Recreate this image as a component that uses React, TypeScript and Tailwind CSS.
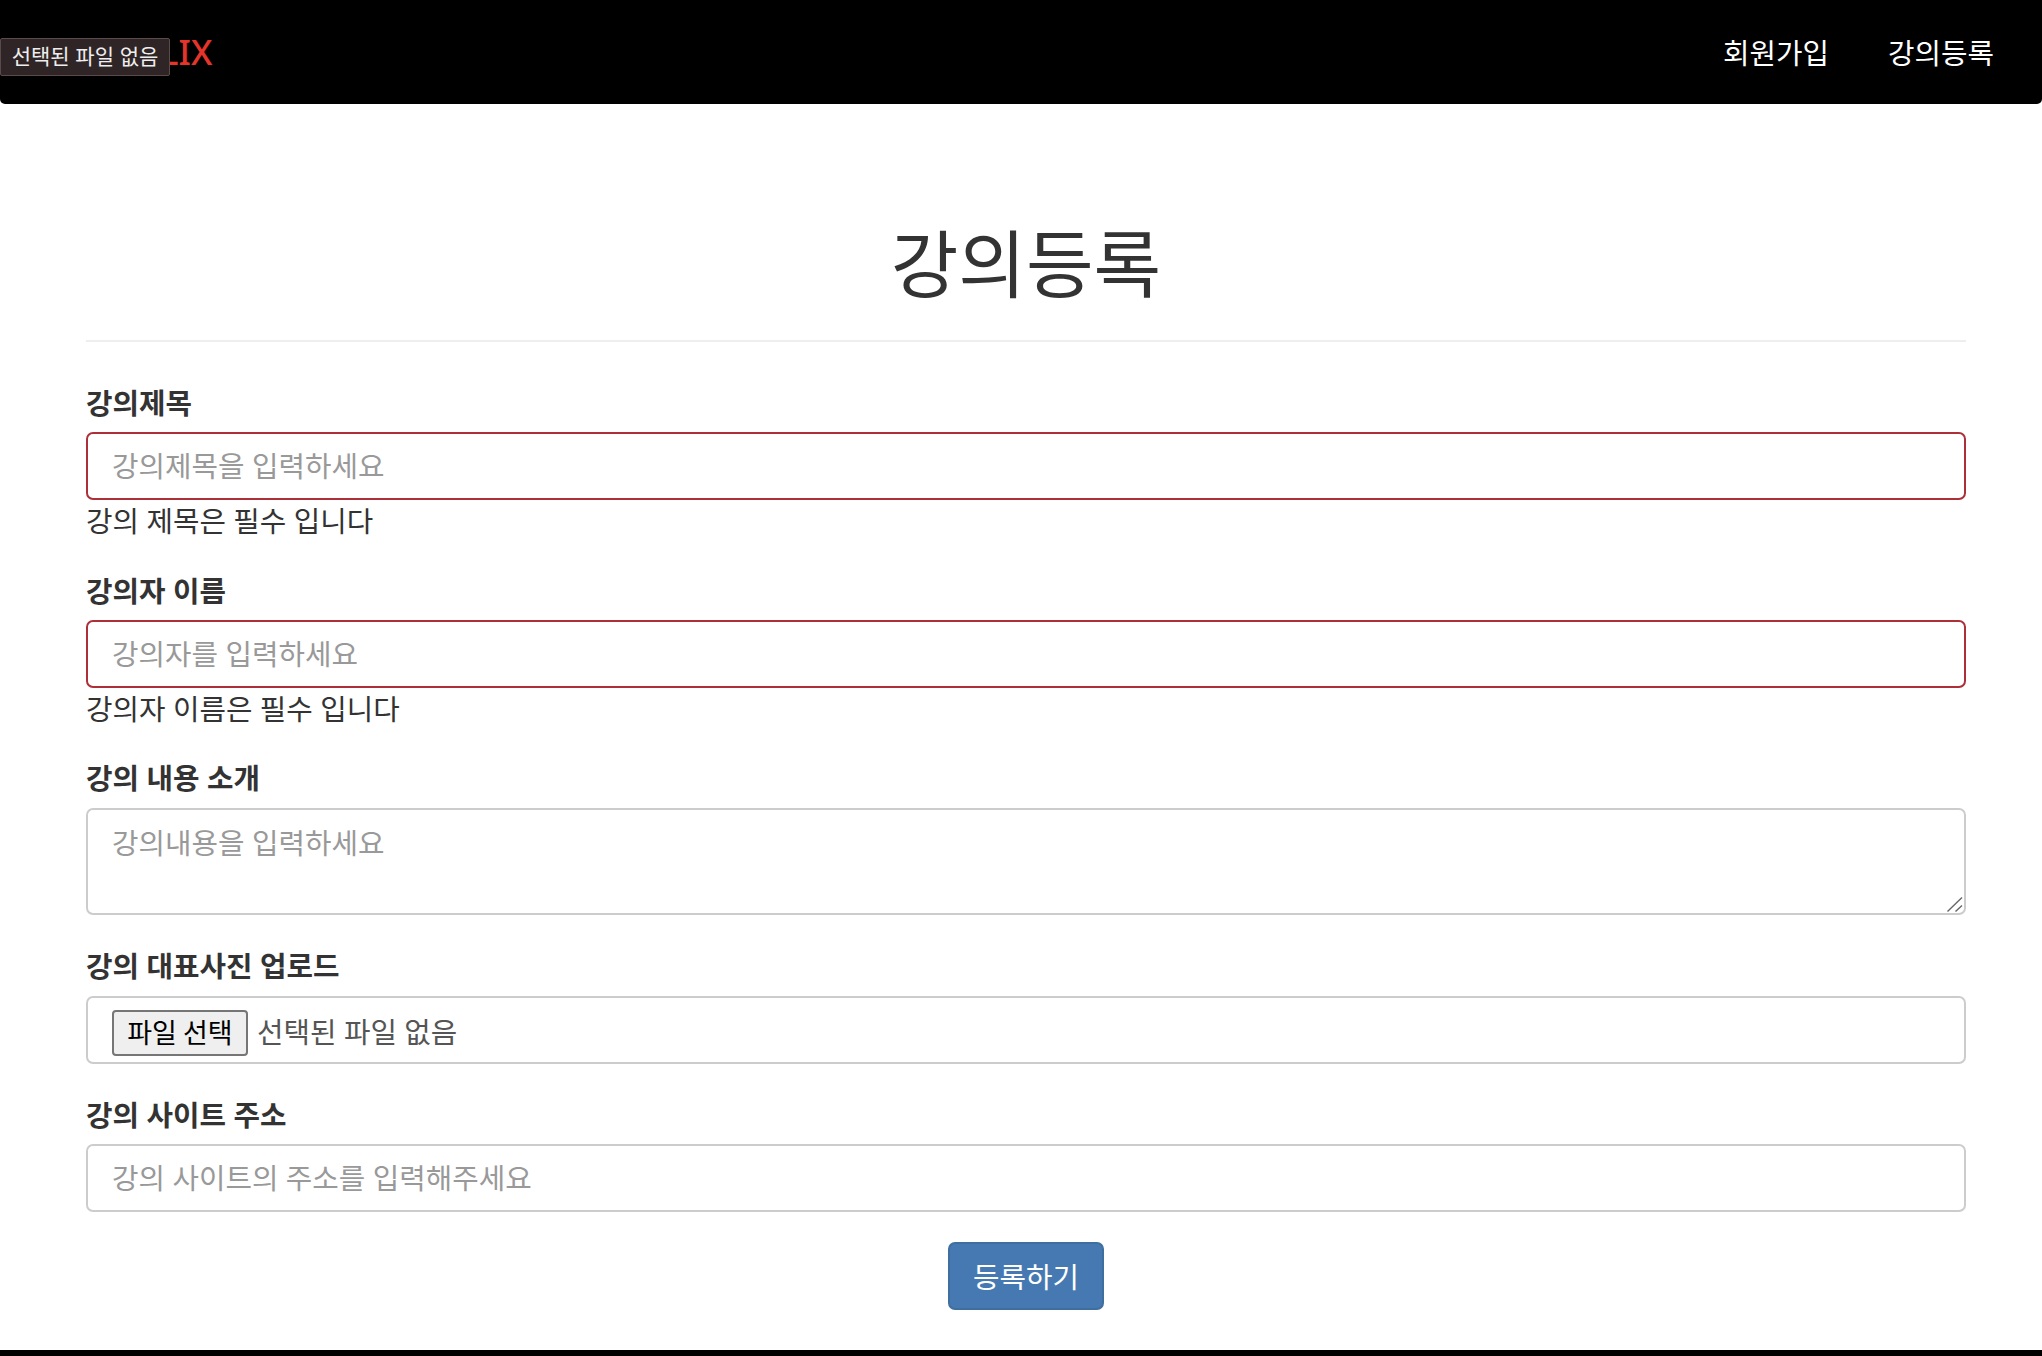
function Label({ children }: { children: string }) {
  return <label className="block h-[36px] text-[28.8px] leading-[36px] font-bold text-[#333]">{children}</label>;
}

const inputClass =
  "block w-full h-[68px] rounded-[7px] border-2 bg-white px-[24px] pb-[3px] text-[28.8px] [word-spacing:1px] text-[#555] outline-none placeholder:text-[#999] ";

export default function App() {
  return (
    <div className="relative h-[1356px] overflow-hidden bg-white font-['Noto_Sans_CJK_KR','Liberation_Sans',sans-serif] text-[#333] [word-spacing:1px]">
      <nav className="flex h-[104px] items-center justify-between rounded-b-[5px] bg-black pl-[75px] pr-[48px]">
        <a className="mb-[2px] text-[35px] leading-none font-medium font-['Noto_Sans',sans-serif] text-[#e5352a]">NETFLIX</a>
        <div className="flex gap-[59px] text-[28.8px] text-white">
          <a>회원가입</a>
          <a>강의등록</a>
        </div>
      </nav>
      <div className="absolute left-0 top-[38px] flex h-[38px] w-[170px] items-center justify-center rounded-[2px] border border-[#5a4a4a] bg-[#302526] pb-[3px] text-[21px] text-[#eee]">
        선택된 파일 없음
      </div>

      <main className="ml-[86px] mr-[76px] pt-[104px]">
        <h1 className="h-[134px] border-b-2 border-[#eee] text-center text-[73.5px] leading-[104px] font-normal text-[#333]">
          강의등록
        </h1>
        <form className="pt-[42px]">
          <Label>강의제목</Label>
          <input className={inputClass + "mt-[12px] border-[#ad2f38]"} placeholder="강의제목을 입력하세요" />
          <p className="h-[36px] text-[28.8px] leading-[40px]">강의 제목은 필수 입니다</p>

          <div className="mt-[36px]">
            <Label>강의자 이름</Label>
          </div>
          <input className={inputClass + "mt-[12px] border-[#ad2f38]"} placeholder="강의자를 입력하세요" />
          <p className="h-[36px] text-[28.8px] leading-[40px]">강의자 이름은 필수 입니다</p>

          <div className="mt-[35px]">
            <Label>강의 내용 소개</Label>
          </div>
          <div className="relative mt-[13px]">
            <textarea
              className="block h-[107px] w-full resize-none rounded-[7px] border-2 border-[#ccc] bg-white px-[24px] py-[10px] text-[28.8px] [word-spacing:1px] text-[#555] outline-none placeholder:text-[#999]"
              placeholder="강의내용을 입력하세요"
            />
            <svg className="absolute bottom-[3px] right-[3px] h-[16px] w-[16px]" viewBox="0 0 16 16" fill="none" stroke="#666" strokeWidth="1.4">
              <path d="M0.5 15.5 L15 1.5" />
              <path d="M8.5 15.5 L15 9.5" />
            </svg>
          </div>

          <div className="mt-[32px]">
            <Label>강의 대표사진 업로드</Label>
          </div>
          <div className="mt-[13px] flex h-[68px] w-full items-center rounded-[7px] border-2 border-[#ccc] bg-white pl-[24px] text-[28.8px] text-[#555]">
            <button
              type="button"
              className="mt-[6px] flex h-[46px] w-[136px] items-center justify-center rounded-[4px] border-2 border-[#767676] bg-[#efefef] pb-[2px] text-[27px] text-black"
            >
              파일 선택
            </button>
            <span className="ml-[9px] mt-[2px]">선택된 파일 없음</span>
          </div>

          <div className="mt-[32px]">
            <Label>강의 사이트 주소</Label>
          </div>
          <input className={inputClass + "mt-[12px] border-[#ccc]"} placeholder="강의 사이트의 주소를 입력해주세요" />

          <div className="mt-[30px] flex justify-center">
            <button
              type="button"
              className="h-[68px] w-[156px] rounded-[7px] border-2 border-[#3f6f9f] bg-[#4679b2] text-[28.8px] text-white"
            >
              등록하기
            </button>
          </div>
        </form>
      </main>
      <div className="absolute inset-x-0 bottom-0 h-[6px] bg-black" />
    </div>
  );
}
